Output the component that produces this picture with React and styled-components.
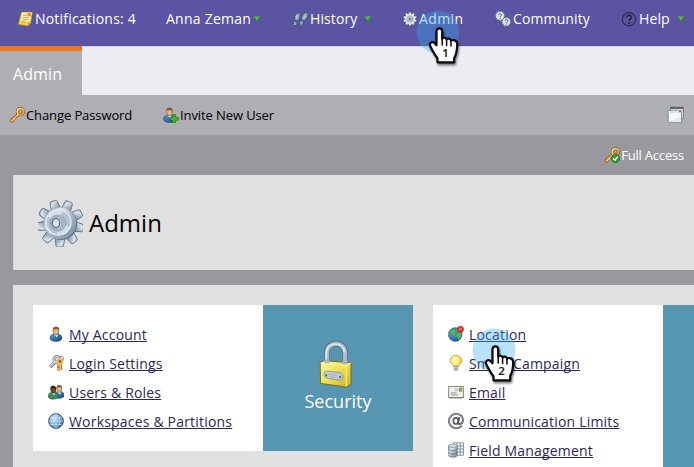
import React from "react";
import styled, { createGlobalStyle } from "styled-components";

const Global = createGlobalStyle`
  * { box-sizing: border-box; }
  html, body { margin: 0; padding: 0; }
  body { overflow: hidden; font-family: "Open Sans", "Noto Sans", sans-serif; }
  svg { display: block; flex: none; }
`;

const Page = styled.div`
  position: relative;
  width: 694px;
  height: 467px;
  overflow: hidden;
  background: #99989d;
`;

const TopBar = styled.nav`
  display: grid;
  grid-template-columns: 148px 126px 110px 93px 126px 73px;
  height: 46px;
  padding: 0 0 9px 18px;
  background: #5a54a2;
`;

const NavItem = styled.div`
  display: flex;
  align-items: center;
  color: #fff;
  font-size: 14px;
  font-weight: 500;
  letter-spacing: ${(p) => p.$spacing || 0.2}px;
  white-space: nowrap;
`;

const NavIcon = styled.span`
  flex: none;
  width: ${(p) => p.$width || 17}px;
`;

const Caret = styled.span`
  margin-left: ${(p) => p.$gap}px;
`;

const TabStrip = styled.div`
  display: flex;
  height: 49px;
  background: #ececf2;
  border-top: 1px solid #d3d1e6;
`;

const Tab = styled.div`
  display: flex;
  align-items: center;
  width: 82px;
  height: 49px;
  margin-top: -1px;
  padding: 2px 0 0 13px;
  border-top: 5px solid #ee7820;
  background: #afaeb3;
  color: #fff;
  font-size: 16px;
  font-weight: 500;
  letter-spacing: 0.1px;
`;

const Toolbar = styled.div`
  display: flex;
  align-items: center;
  height: 40px;
  padding: 0 9px;
  background: #afaeb3;
`;

const Action = styled.div`
  display: flex;
  align-items: center;
  width: ${(p) => p.$width}px;
  color: #000;
  font-size: 13px;
  letter-spacing: -0.1px;
  white-space: nowrap;
`;

const WindowSlot = styled.div`
  margin-left: auto;
`;

const AccessRow = styled.div`
  display: flex;
  align-items: center;
  justify-content: flex-end;
  gap: 1px;
  height: 40px;
  padding-right: 10px;
  color: #fff;
  font-size: 13px;
  font-weight: 500;
  letter-spacing: -0.2px;
`;

const Heading = styled.header`
  display: flex;
  align-items: center;
  gap: 6px;
  height: 95px;
  margin-left: 13px;
  padding-left: 24px;
  background: #e0e0e0;
  border-left: 1px solid #d2d2d3;
`;

const Title = styled.h1`
  margin: 0;
  color: #000;
  font-size: 24px;
  font-weight: 400;
`;

const Board = styled.main`
  display: flex;
  align-items: flex-start;
  gap: 20px;
  height: 182px;
  margin: 15px 0 0 13px;
  padding: 20px 0 0 20px;
  overflow: hidden;
  background: #e0e0e0;
`;

const Card = styled.section`
  display: flex;
  flex: none;
  width: 380px;
  height: ${(p) => p.$height}px;
  background: #fff;
`;

const LinkList = styled.ul`
  width: 230px;
  margin: 0;
  padding: 15px 0 0 15px;
  list-style: none;
`;

const LinkRow = styled.li`
  display: flex;
  align-items: center;
  gap: 5px;
  height: 29px;

  > svg { margin-bottom: 2px; }
`;

const Link = styled.a`
  color: #2c2858;
  font-size: 14px;
  letter-spacing: 0.19px;
  line-height: 20px;
  text-decoration: underline;
  text-decoration-thickness: 1px;
  text-decoration-skip-ink: none;
  text-underline-offset: 1px;
  white-space: nowrap;
`;

const CategoryTile = styled.div`
  display: flex;
  flex-direction: column;
  align-items: center;
  width: 150px;
  padding-top: 36px;
  background: #5796b1;
  color: #fff;
  font-size: 18px;
  font-weight: 500;
  line-height: 24px;
`;

const TileArt = styled.span`
  margin: -1px 5px 1px 0;
`;

const Pointer = styled.div`
  position: absolute;
  left: ${(p) => p.$x}px;
  top: ${(p) => p.$y}px;
  width: 56px;
  height: 64px;
`;

const DefsHolder = styled.div`
  position: absolute;
  width: 0;
  height: 0;
`;

const Defs = () => (
  <svg width="0" height="0" aria-hidden="true">
    <defs>
      <linearGradient id="steel" x1="0" y1="0" x2="1" y2="1">
        <stop offset="0" stopColor="#8d9fb0" /><stop offset=".3" stopColor="#dce5ed" />
        <stop offset=".6" stopColor="#a3b3c3" /><stop offset="1" stopColor="#71859a" />
      </linearGradient>
      <linearGradient id="gold" x1="0" y1="0" x2="1" y2="1">
        <stop offset="0" stopColor="#ffe39a" /><stop offset="1" stopColor="#d9912b" />
      </linearGradient>
      <linearGradient id="brass" x1="0" y1="0" x2="1" y2="1">
        <stop offset="0" stopColor="#fbf7a0" /><stop offset=".5" stopColor="#efe052" /><stop offset="1" stopColor="#c9ae24" />
      </linearGradient>
      <radialGradient id="globe" cx=".38" cy=".35" r=".7">
        <stop offset="0" stopColor="#c8e6fa" /><stop offset=".6" stopColor="#6ea3cd" /><stop offset="1" stopColor="#3b5f87" />
      </radialGradient>
      <radialGradient id="sea" cx=".35" cy=".35" r=".7">
        <stop offset="0" stopColor="#71baf2" /><stop offset="1" stopColor="#164c9c" />
      </radialGradient>
      <radialGradient id="bulb" cx=".4" cy=".4" r=".65">
        <stop offset="0" stopColor="#fffbd0" /><stop offset=".6" stopColor="#ffe968" /><stop offset="1" stopColor="#dfa81d" />
      </radialGradient>
      <linearGradient id="shirt" x1="0" y1="0" x2="1" y2="1">
        <stop offset="0" stopColor="#5b9ddb" /><stop offset="1" stopColor="#123f80" />
      </linearGradient>
    </defs>
  </svg>
);

const Icon = ({ children }) => (
  <svg width="16" height="16" viewBox="0 0 16 16" fill="none">{children}</svg>
);

const NoteIcon = () => (
  <Icon>
    <path d="M3.5 1.2h11l-2 11.2-2.7 2.5-9.6-1.5z" fill="#f7d34c" stroke="#a98426" strokeWidth=".6" />
    <path d="M4 1.6h9.8l-1.7 9.5-9.6-.5z" fill="#fff0a0" />
    <path d="M5 4.3h4M4.500 6.600h6.500M4.100 8.800h6.500M3.600 11h4" stroke="#a79b60" strokeWidth=".8" />
    <path d="m12 11.500-2.400 2.900.2-3.200z" fill="#d59e20" />
    <circle cx="11.300" cy="3.600" r="1.900" fill="#f58a25" />
  </Icon>
);

const FeetIcon = () => (
  <Icon>
    <g fill="#8fa9b8" stroke="#3c4a66" strokeWidth=".7" transform="translate(0 .5)">
      <g transform="rotate(18 4.500 8)">
        <ellipse cx="4.400" cy="5.300" rx="2.600" ry="4" />
        <ellipse cx="4.400" cy="12.200" rx="1.900" ry="2.300" />
      </g>
      <g transform="rotate(28 11.500 8)">
        <ellipse cx="11.200" cy="4.800" rx="2.600" ry="4.300" />
        <ellipse cx="11.200" cy="12" rx="1.900" ry="2.500" />
      </g>
    </g>
    <path d="m5.300 4-.6 4M13 4l-1.500 4" stroke="#bacdd7" strokeWidth="1.200" />
  </Icon>
);

const teeth = (n) => Array.from({ length: n }, (_, i) => (360 / n) * i);

const SmallGear = () => (
  <Icon>
    {teeth(10).map((a) => (
      <path key={a} d="M6.500 3.500 7 1.200h2l.5 2.300z" fill="#e6ecec" stroke="#4d5263" strokeWidth=".4" transform={`rotate(${a} 8 8)`} />
    ))}
    <circle cx="8" cy="8" r="5.200" fill="#dfe6e7" />
    <circle cx="8" cy="8" r="3.200" fill="#c3ccd1" stroke="#8b959f" strokeWidth=".6" />
    <circle cx="8" cy="8" r="1.600" fill="#77749b" />
  </Icon>
);

const CommunityIcon = () => (
  <Icon>
    <g fill="#d5e4e6" stroke="#59627a" strokeWidth=".5">
      <path d="M4 7.500 6.200 11l1-4z" />
      <circle cx="5" cy="4.800" r="4.500" />
      <path d="m9.500 13-.7 2.700 4-1.500z" />
      <circle cx="11.400" cy="10.700" r="4.300" />
    </g>
    <path d="M3.700 4c.1-2 2.900-1.800 2.700 0C6.300 5.100 5.100 5.100 5.100 6.100M10.200 9.800c.1-2 2.800-1.800 2.600 0-.1 1.100-1.200 1.100-1.200 2" stroke="#4b586c" strokeWidth=".9" />
    <path d="M4.600 7h.9v.9h-.9zm6.500 5.700h.9v.9h-.9z" fill="#4b586c" />
  </Icon>
);

const HelpIcon = () => (
  <Icon>
    <circle cx="8" cy="8.200" r="6.600" stroke="#2c2e4a" strokeWidth="1.200" />
    <path d="M5.600 6.500c.1-2.900 4.900-2.900 4.800.1C10.300 8.300 8.100 8.200 8.100 10" stroke="#252c40" strokeWidth="1.700" />
    <circle cx="8.100" cy="12" r="1.100" fill="#252c40" />
  </Icon>
);

const Down = ({ gap }) => (
  <Caret $gap={gap}>
    <svg width="8" height="8" viewBox="0 0 8 8"><path d="M.4 1.300h7.200L4 7.600z" fill="#3c8f35" /><path d="M1 1.600h5.500L3.800 5z" fill="#5fb846" /></svg>
  </Caret>
);

const KeyArt = () => (
  <>
    <path d="M9.300 7.400 3.200 13.500M3.400 10.300l2.400 2.600M1.400 12.400l2.500 2.500" stroke="#885019" strokeWidth="3" />
    <circle cx="11.400" cy="4.700" r="3.100" stroke="#885019" strokeWidth="3" />
    <path d="M9.300 7.400 2.800 13.900M3.600 10.700l2.100 2.100M1.700 12.700l1.800 1.800" stroke="#f4be60" strokeWidth="1.600" />
    <circle cx="11.400" cy="4.700" r="3.100" stroke="url(#gold)" strokeWidth="1.800" />
  </>
);

const KeyIcon = () => <Icon><KeyArt /></Icon>;

const AccessIcon = () => (
  <Icon>
    <KeyArt />
    <circle cx="11.500" cy="11.500" r="4.200" fill="#31982f" stroke="#246f25" strokeWidth=".6" />
    <path d="m9.200 11.500 1.800 1.700 2.700-3.600" stroke="#fff" strokeWidth="1.500" />
  </Icon>
);

const PersonArt = ({ skin = "#e3b889", hair = "#85592d", shirt = "url(#shirt)" }) => (
  <>
    <path d="M2 11.500c.3-2.500 2.200-3.500 4.500-3.500h3c2.500 0 4.300 1.300 4.500 4 0 4.500-11.500 4.500-12 .6z" fill={shirt} stroke="#263e58" strokeWidth=".5" />
    <path d="m6 8.300 2.800 3.100L10 8.200z" fill="#e7f0f5" />
    <ellipse cx="8" cy="4.800" rx="3" ry="3.900" fill={skin} stroke={hair} strokeWidth=".7" />
    <path d="M4.900 5C4.300 1.500 6 .3 8.500.7c2 .2 2.900 1.500 2.500 4L9.500 2.900c-2 .8-3.300.8-4 .2z" fill={hair} />
  </>
);

const PersonIcon = () => <Icon><PersonArt /></Icon>;

const InviteIcon = () => (
  <Icon>
    <g transform="translate(-1.500 0)"><PersonArt /></g>
    <path d="M9.600 7.600h3v2.700h2.700v2.900h-2.700v2.600h-3v-2.600H7v-2.900h2.600z" fill="#43b332" stroke="#22781d" strokeWidth=".7" />
  </Icon>
);

const UsersIcon = () => (
  <Icon>
    <g transform="translate(4.500 .5) scale(.85 .9)"><PersonArt /></g>
    <g transform="translate(-1.500 1.300) scale(.85 .9)"><PersonArt skin="#704628" hair="#2b211b" shirt="#339153" /></g>
  </Icon>
);

const LoginKeysIcon = () => (
  <Icon>
    <path d="M2 12 9 5.500" stroke="#616b75" strokeWidth="3.200" />
    <circle cx="9" cy="4.700" r="3" stroke="#616b75" strokeWidth="2.800" />
    <path d="M1.500 12 9 5.500" stroke="#cdd7df" strokeWidth="1.700" />
    <circle cx="9" cy="4.700" r="3" stroke="#d1dbe2" strokeWidth="1.500" />
    <path d="M11.500 2c3-2 4.500.5 3.500 3.500" stroke="#687583" strokeWidth="1" />
    <path d="M12.500 8v7M12.500 11H9.300M12.500 14H9.500" stroke="#9b5d1f" strokeWidth="3" />
    <circle cx="12" cy="6.400" r="2.400" fill="#8b6229" stroke="#e9b855" strokeWidth="2" />
    <path d="M12.500 8v7M12.500 11H9.900M12.500 14H10" stroke="#f1bd5d" strokeWidth="1.700" />
  </Icon>
);

const GlobeIcon = () => (
  <Icon>
    <circle cx="8" cy="8" r="7.400" fill="url(#globe)" stroke="#4b6074" strokeWidth="1" />
    <path d="M8 1v14M2 4.700h12M1 8h14M2 11.500h12M8 1C3 4.500 3 11.500 8 15M8 1c5 3.500 5 10.500 0 14" stroke="#d2edfb" strokeWidth=".6" />
  </Icon>
);

const LocationIcon = () => (
  <Icon>
    <circle cx="7.200" cy="8.500" r="6.900" fill="url(#sea)" stroke="#35688a" strokeWidth=".5" />
    <path d="M1.300 6.500 4.500 3l3.600.2L7 5.500l.7 1.500-2.300 1.200-.7 2-2-1.700zM8.500 7l3-1.300 2.200 1.800-.5 3.300-2.500 3.400-1.200-2.600L7.800 10z" fill="#5ab74b" stroke="#267037" strokeWidth=".4" />
    <circle cx="12.500" cy="3.300" r="3.100" fill="#df3327" stroke="#9d211d" strokeWidth=".5" />
    <path d="m10.700 3.700 2-1.100.8 1.200" stroke="#ffb4a3" strokeWidth="1" />
  </Icon>
);

const BulbIcon = () => (
  <Icon>
    <path d="M5.600 11.500C5.200 9 2.200 8.500 2.200 5.500a5.800 5.200 0 0 1 11.600 0c0 3-3 3.500-3.400 6z" fill="url(#bulb)" stroke="#c7942a" strokeWidth=".7" />
    <path d="M6.500 10V6.700l1.500 1 1.500-1V10" stroke="#fffbe0" strokeWidth="1" />
    <path d="M5.700 11h4.600v3.500L9 15.700H7l-1.300-1.200z" fill="#89939b" />
    <path d="M5.700 12.300h4.600M6 14h4" stroke="#e5eaee" strokeWidth=".7" />
  </Icon>
);

const MailIcon = () => (
  <Icon>
    <path d="M.6 2.500h14.800v11H.6z" fill="#eef0eb" stroke="#777d7d" strokeWidth=".9" />
    <path d="M11.500 4h2.400v3.200h-2.400z" fill="#c9b539" stroke="#6d6723" strokeWidth=".6" />
    <path d="M6.500 5.200q1.500-1.200 2.700 0t2-.2M6.700 6.900q1.200-1 2.400 0" stroke="#8b9090" strokeWidth=".7" />
    <path d="M2.700 8.900h5.800M2.700 10.900H10" stroke="#8a918f" strokeWidth=".9" />
    <path d="M1 14h14.500" stroke="#777" strokeWidth=".8" />
  </Icon>
);

const AtIcon = () => (
  <Icon>
    <path d="M14 12.700c-3.200 4-11.300 3-12.700-2.700C-.2 3.500 5.500-.3 10.700 1.300c5 1.500 5.800 8.200 1.500 9.600-1.700.4-2.200-.6-1.900-1.800l1-5" stroke="#54595e" strokeWidth="1.900" />
    <ellipse cx="7.800" cy="7.900" rx="2.400" ry="3.100" stroke="#54595e" strokeWidth="1.700" />
    <path d="M14 12.700c-3.200 4-11.300 3-12.700-2.700C-.2 3.500 5.500-.3 10.700 1.300c5 1.500 5.800 8.200 1.500 9.600" stroke="#b9bfc4" strokeWidth=".7" />
  </Icon>
);

const FieldIcon = () => (
  <Icon>
    <path d="M5.500.8h10v12.500h-10z" fill="#f3f7fa" stroke="#6e8190" strokeWidth=".8" />
    <path d="M5.500 4h10M5.500 7h10M5.500 10h10M9 1v12M12.300 1v12" stroke="#768995" strokeWidth=".9" />
    <path d="M.6 3.500v10.200c0 2 8.300 2 8.300 0V3.500z" fill="url(#steel)" stroke="#566979" strokeWidth=".6" />
    <ellipse cx="4.750" cy="3.700" rx="4.100" ry="1.700" fill="#d6e0e7" stroke="#687c8b" strokeWidth=".6" />
    <path d="M.7 7.200c1 2 7 2 8.100 0M.7 10.500c1 2 7 2 8.100 0" stroke="#5e7181" strokeWidth=".7" />
  </Icon>
);

const WindowsIcon = () => (
  <svg width="18" height="18" viewBox="0 0 18 18" fill="none">
    <path d="M3.500 1.200h13v11.500h-13z" fill="#cbd9df" stroke="#68767e" strokeWidth=".8" />
    <path d="M3.500 1h13v2h-13z" fill="#59666e" />
    <path d="M14 1.200h2v1.300h-2z" fill="#df3c2b" />
    <path d="M1.200 4.900h13.200v11.400H1.200z" fill="#f5f9fa" stroke="#758a95" strokeWidth=".9" />
    <path d="M1.500 5h12.600v2H1.500z" fill="#dbe3e8" />
    <path d="M12 5h2v1.300h-2z" fill="#e04434" />
    <path d="M2 15.500 13.700 11v4.800H2z" fill="#dcebf0" />
  </svg>
);

const LargeGear = () => (
  <svg width="45" height="48" viewBox="0 0 45 48" fill="none">
    {teeth(9).map((a) => (
      <path key={a} d="m17.500 11.500 1.200-9q.2-1.500 1.500-1.500h4.600q1.300 0 1.500 1.500l1.200 9z" fill="url(#steel)" stroke="#62758a" strokeWidth=".9" transform={`rotate(${a + 22} 22.500 24.500)`} />
    ))}
    <circle cx="23.200" cy="25" r="16" fill="#60748a" />
    <circle cx="22" cy="24" r="16" fill="url(#steel)" stroke="#8fa1b3" strokeWidth=".6" />
    <circle cx="20.500" cy="23.500" r="12.500" fill="#b4c4d3" stroke="#e4edf4" strokeWidth="1.300" />
    <path d="M20.500 23.500 9.500 17.500a12.500 12.500 0 0 1 15-5.500zM20.500 23.500l11.800 4A12.500 12.500 0 0 1 19 36z" fill="#dce6ee" opacity=".75" />
    <circle cx="19.800" cy="24" r="8" fill="#a8b8c7" stroke="#93a5b6" strokeWidth=".9" />
    <ellipse cx="18.300" cy="24" rx="5.300" ry="6.500" fill="#d5e0e9" stroke="#8699ab" strokeWidth=".7" />
    <ellipse cx="18" cy="24" rx="3.700" ry="4.800" fill="#e0e0e0" stroke="#5f7388" strokeWidth="1.400" />
  </svg>
);

const Padlock = () => (
  <svg width="34" height="48" viewBox="0 0 34 48" fill="none">
    <path d="M8 24V13C8 .5 26 .5 26 13v12" stroke="#53677b" strokeWidth="5.800" />
    <path d="M8 24V13C8 .5 26 .5 26 13v12" stroke="#aebdcb" strokeWidth="4.300" />
    <path d="M7.200 23V13C7.500 1 25 1 25.500 12.500" stroke="#e2eaf1" strokeWidth="1.400" />
    <path d="M1.200 22.500 5 20.700l27 2v21.500l-4.500 2.900-26-3.700z" fill="url(#brass)" stroke="#796c20" />
    <path d="m1.700 23 25.500 2.500L32 23M27.200 25.700v21" stroke="#fff59b" strokeWidth="1" />
    <path d="M5.500 19.500h5v3.200c-1 .8-4 .8-5 0zM23.500 20.500h5v3.200c-1 .8-4 .8-5 0z" fill="#a5b4c1" />
    <path d="m7.500 31 12.500 1.300c3.500 1 4.300 3 3.700 6L22 40.300 9 38.500c-4-1-4.500-3.500-4-5.900z" fill="#bdc9d2" stroke="#798593" strokeWidth=".7" />
    <circle cx="7.300" cy="35.300" r="1.100" fill="#56636e" /><circle cx="21" cy="37" r="1.100" fill="#56636e" />
    <path d="m10.500 34.500 7 1M10.500 36.500l7 1" stroke="#96a4ae" strokeWidth=".8" strokeDasharray="2 1" />
  </svg>
);

const Hand = ({ x, y, step }) => (
  <Pointer $x={x} $y={y}>
    <svg width="56" height="64" viewBox="0 0 56 64" fill="none">
      <circle cx="22" cy="22" r="21.500" fill="#34a9f0" fillOpacity=".35" />
      <g filter="url(#handShadow)">
        <path d="M20.500 21.500c0-4.300 5.700-4.300 5.700 0v7.200c1.200-1.500 3.900-1.300 4.300.7 1.300-1.400 4-.9 4.400 1.200 1.800-1.300 6.300-.4 6.300 3.400 0 6.500-1 10.500-3 14v4.300H21.500v-4.100c-3-3.600-4.500-6.800-7.100-11.700-1.700-3.300 1.700-5.700 4.300-3.200l1.800 2z" fill="#fff" stroke="#080808" strokeWidth="2.200" strokeLinejoin="round" />
        <path d="M26.200 28v7M30.600 29.500v6M35 31v5" stroke="#080808" strokeWidth="1.500" strokeLinecap="round" />
      </g>
      <text x="29.500" y="47.300" textAnchor="middle" fill="#222" stroke="#222" strokeWidth=".2" fontFamily="Open Sans, sans-serif" fontSize="11.500" fontWeight="600">{step}</text>
      <defs>
        <filter id="handShadow" x="-30%" y="-30%" width="170%" height="170%">
          <feDropShadow dx="1" dy="2" stdDeviation="1.200" floodColor="#000" floodOpacity=".5" />
        </filter>
      </defs>
    </svg>
  </Pointer>
);

const securityLinks = [
  [PersonIcon, "My Account"],
  [LoginKeysIcon, "Login Settings"],
  [UsersIcon, "Users & Roles"],
  [GlobeIcon, "Workspaces & Partitions"],
];

const integrationLinks = [
  [LocationIcon, "Location"],
  [BulbIcon, "Smart Campaign"],
  [MailIcon, "Email"],
  [AtIcon, "Communication Limits"],
  [FieldIcon, "Field Management"],
];

const Links = ({ items }) => (
  <LinkList>
    {items.map(([Glyph, label]) => (
      <LinkRow key={label}><Glyph /><Link>{label}</Link></LinkRow>
    ))}
  </LinkList>
);

export default function App() {
  return (
    <Page>
      <Global />
      <DefsHolder><Defs /></DefsHolder>
      <TopBar>
        <NavItem><NavIcon><NoteIcon /></NavIcon>Notifications: 4</NavItem>
        <NavItem $spacing={0.25}>Anna Zeman<Down gap={2} /></NavItem>
        <NavItem $spacing={0.1}><NavIcon $width={18}><FeetIcon /></NavIcon>History<Down gap={7} /></NavItem>
        <NavItem $spacing={0.4}><NavIcon><SmallGear /></NavIcon>Admin</NavItem>
        <NavItem $spacing={0.12}><NavIcon $width={18}><CommunityIcon /></NavIcon>Community</NavItem>
        <NavItem $spacing={0.1}><NavIcon $width={18}><HelpIcon /></NavIcon>Help<Down gap={7} /></NavItem>
      </TopBar>
      <TabStrip><Tab>Admin</Tab></TabStrip>
      <Toolbar>
        <Action $width={154}><NavIcon><KeyIcon /></NavIcon>Change Password</Action>
        <Action $width={130}><NavIcon><InviteIcon /></NavIcon>Invite New User</Action>
        <WindowSlot><WindowsIcon /></WindowSlot>
      </Toolbar>
      <AccessRow><AccessIcon />Full Access</AccessRow>
      <Heading><LargeGear /><Title>Admin</Title></Heading>
      <Board>
        <Card $height={146}>
          <Links items={securityLinks} />
          <CategoryTile><TileArt><Padlock /></TileArt>Security</CategoryTile>
        </Card>
        <Card $height={180}>
          <Links items={integrationLinks} />
          <CategoryTile />
        </Card>
      </Board>
      <Hand x={416} y={10} step="1" />
      <Hand x={472} y={328} step="2" />
    </Page>
  );
}
